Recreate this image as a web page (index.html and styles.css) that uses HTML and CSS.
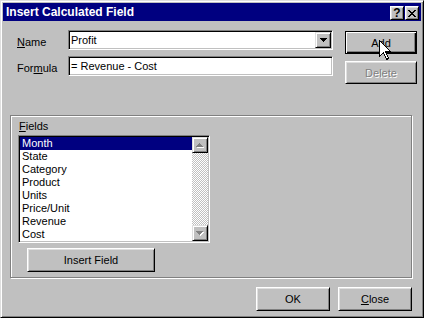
FILE: index.html
```html
<!DOCTYPE html>
<html lang="en">
    <head>
        <meta charset="UTF-8" />
        <meta name="viewport" content="width=device-width, initial-scale=1.0" />
        <title>Insert Calculated Field</title>
        <link rel="stylesheet" href="styles.css">
    </head>
    <body>
        <div class="dialog">
            <div class="titlebar">
                <span class="title">Insert Calculated Field</span>
                <button class="cap-btn help">?</button>
                <button class="cap-btn close">
                    <svg width="8" height="7" viewBox="0 0 8 7" shape-rendering="crispEdges">
                        <path fill="#000" d="M0 0h2v1H0zM6 0h2v1H6zM1 1h2v1H1zM5 1h2v1H5zM2 2h4v1H2zM3 3h2v1H3zM2 4h4v1H2zM1 5h2v1H1zM5 5h2v1H5zM0 6h2v1H0zM6 6h2v1H6z" />
                    </svg>
                </button>
            </div>

            <div class="main">
                <div class="top">
                    <div class="form">
                        <label class="label"><u>N</u>ame</label>
                        <div class="combo">
                            <span class="field-text">Profit</span>
                            <span class="drop-btn">
                                <svg width="7" height="4" viewBox="0 0 7 4" shape-rendering="crispEdges">
                                    <path fill="#000" d="M0 0h7v1H0zM1 1h5v1H1zM2 2h3v1H2zM3 3h1v1H3z" />
                                </svg>
                            </span>
                        </div>
                        <label class="label">For<u>m</u>ula</label>
                        <div class="textbox">
                            <span class="field-text">= Revenue - Cost</span>
                        </div>
                    </div>
                    <div class="side">
                        <button class="btn default">Add</button>
                        <button class="btn" disabled>Delete</button>
                    </div>
                </div>

                <div class="group">
                    <div class="group-label"><u>F</u>ields</div>
                    <div class="listbox">
                        <ul class="items">
                            <li class="selected">Month</li>
                            <li>State</li>
                            <li>Category</li>
                            <li>Product</li>
                            <li>Units</li>
                            <li>Price/Unit</li>
                            <li>Revenue</li>
                            <li>Cost</li>
                        </ul>
                        <div class="scrollbar">
                            <div class="arrow">
                                <svg width="8" height="5" viewBox="0 0 8 5" shape-rendering="crispEdges">
                                    <path fill="#fff" d="M4 1h1v1H4zM3 2h3v1H3zM2 3h5v1H2zM1 4h7v1H1z" />
                                    <path fill="#808080" d="M3 0h1v1H3zM2 1h3v1H2zM1 2h5v1H1zM0 3h7v1H0z" />
                                </svg>
                            </div>
                            <div class="track"></div>
                            <div class="arrow">
                                <svg width="8" height="5" viewBox="0 0 8 5" shape-rendering="crispEdges">
                                    <path fill="#fff" d="M1 1h7v1H1zM2 2h5v1H2zM3 3h3v1H3zM4 4h1v1H4z" />
                                    <path fill="#808080" d="M0 0h7v1H0zM1 1h5v1H1zM2 2h3v1H2zM3 3h1v1H3z" />
                                </svg>
                            </div>
                        </div>
                    </div>
                    <button class="btn insert">Insert Field</button>
                </div>

                <div class="footer">
                    <button class="btn wide">OK</button>
                    <button class="btn wide"><u>C</u>lose</button>
                </div>
            </div>

            <!-- mouse pointer resting on the Add button -->
            <svg class="cursor" width="13" height="21" viewBox="0 0 13 21" shape-rendering="crispEdges">
                <path fill="#fff" stroke="#000" stroke-width="1" d="M0.5 0.5V16.5L4.5 12.5L7.5 19.5L9.5 18.5L6.5 11.5H11.5Z" />
            </svg>
        </div>
    </body>
</html>
```

FILE: styles.css
```css
body {
    margin: 0;
    background-color: #c0c0c0;
    font-family: "Liberation Sans", Arial, sans-serif;
    font-size: 11px;
    color: #000000;
}
.dialog {
    position: relative;
    width: 424px;
    height: 318px;
    box-sizing: border-box;
    padding: 2px;
    background-color: #c0c0c0;
    border: 1px solid;
    border-color: #dfdfdf #000000 #000000 #dfdfdf;
    box-shadow: inset 1px 1px #ffffff, inset -1px -1px #808080;
}
.titlebar {
    display: flex;
    height: 18px;
    background-color: #000080;
    color: #ffffff;
}
.title {
    flex: 1;
    padding-left: 3px;
    font-size: 12px;
    font-weight: bold;
    line-height: 18px;
}
.cap-btn {
    width: 14px;
    height: 14px;
    margin-top: 3px;
    padding: 0;
    box-sizing: border-box;
    display: flex;
    align-items: center;
    justify-content: center;
    background-color: #c0c0c0;
    border: 1px solid;
    border-color: #ffffff #000000 #000000 #ffffff;
    box-shadow: inset 1px 1px #dfdfdf, inset -1px -1px #808080;
}
.help {
    font-family: "Liberation Sans", Arial, sans-serif;
    font-size: 12px;
    font-weight: bold;
    line-height: 12px;
    color: #000000;
}
.close {
    margin-left: 1px;
    margin-right: 2px;
}
.main {
    padding: 0 9px 0 7px;
}
.top {
    display: flex;
    padding: 9px 0 0 7px;
    margin-right: -6px;
}
.form {
    display: grid;
    grid-template-columns: 51px 265px;
    grid-auto-rows: 20px;
    row-gap: 6px;
}
.label {
    padding-top: 6px;
    line-height: 13px;
}
.combo,
.textbox {
    display: flex;
    box-sizing: border-box;
    padding: 1px;
    background-color: #ffffff;
    border: 1px solid;
    border-color: #808080 #ffffff #ffffff #808080;
    box-shadow: inset 1px 1px #000000, inset -1px -1px #c0c0c0;
}
.field-text {
    flex: 1;
    padding-left: 1px;
    line-height: 16px;
    white-space: nowrap;
}
.drop-btn {
    width: 16px;
    height: 16px;
    box-sizing: border-box;
    display: flex;
    align-items: center;
    justify-content: center;
    background-color: #c0c0c0;
    border: 1px solid;
    border-color: #dfdfdf #000000 #000000 #dfdfdf;
    box-shadow: inset 1px 1px #ffffff, inset -1px -1px #808080;
}
.side {
    display: flex;
    flex-direction: column;
    gap: 7px;
    margin-left: 12px;
    padding-top: 1px;
}
.btn {
    width: 72px;
    height: 23px;
    padding: 0;
    box-sizing: border-box;
    font-family: "Liberation Sans", Arial, sans-serif;
    font-size: 11px;
    color: #000000;
    background-color: #c0c0c0;
    border: 1px solid;
    border-color: #ffffff #000000 #000000 #ffffff;
    box-shadow: inset 1px 1px #dfdfdf, inset -1px -1px #808080;
}
.btn.default {
    border-color: #000000;
    box-shadow: inset 1px 1px #ffffff, inset -1px -1px #000000, inset -2px -2px #808080;
}
.btn:disabled {
    color: #808080;
    text-shadow: 1px 1px #ffffff;
}
.group {
    margin-top: 31px;
    padding: 4px 0 5px 7px;
    border: 1px solid #808080;
    box-shadow: 1px 1px #ffffff, inset 1px 1px #ffffff;
}
.group-label {
    margin: 0 0 2px 1px;
    line-height: 13px;
}
.listbox {
    display: flex;
    width: 192px;
    height: 108px;
    box-sizing: border-box;
    padding: 1px;
    background-color: #ffffff;
    border: 1px solid;
    border-color: #808080 #ffffff #ffffff #808080;
    box-shadow: inset 1px 1px #000000, inset -1px -1px #c0c0c0;
}
.items {
    flex: 1;
    margin: 0;
    padding: 0;
    list-style: none;
}
.items li {
    height: 13px;
    padding-left: 2px;
    line-height: 13px;
}
.items .selected {
    background-color: #000080;
    color: #ffffff;
}
.scrollbar {
    display: flex;
    flex-direction: column;
    width: 16px;
    background-image: repeating-conic-gradient(#ffffff 0 25%, #c0c0c0 0 50%);
    background-size: 2px 2px;
}
.arrow {
    height: 16px;
    box-sizing: border-box;
    display: flex;
    align-items: center;
    justify-content: center;
    background-color: #c0c0c0;
    border: 1px solid;
    border-color: #dfdfdf #000000 #000000 #dfdfdf;
    box-shadow: inset 1px 1px #ffffff, inset -1px -1px #808080;
}
.track {
    flex: 1;
}
.btn.insert {
    display: block;
    width: 128px;
    height: 24px;
    margin: 5px 0 0 9px;
}
.footer {
    display: flex;
    justify-content: flex-end;
    gap: 8px;
    margin-top: 9px;
}
.btn.wide {
    width: 74px;
    height: 24px;
}
.cursor {
    position: absolute;
    left: 378px;
    top: 39px;
}
```
